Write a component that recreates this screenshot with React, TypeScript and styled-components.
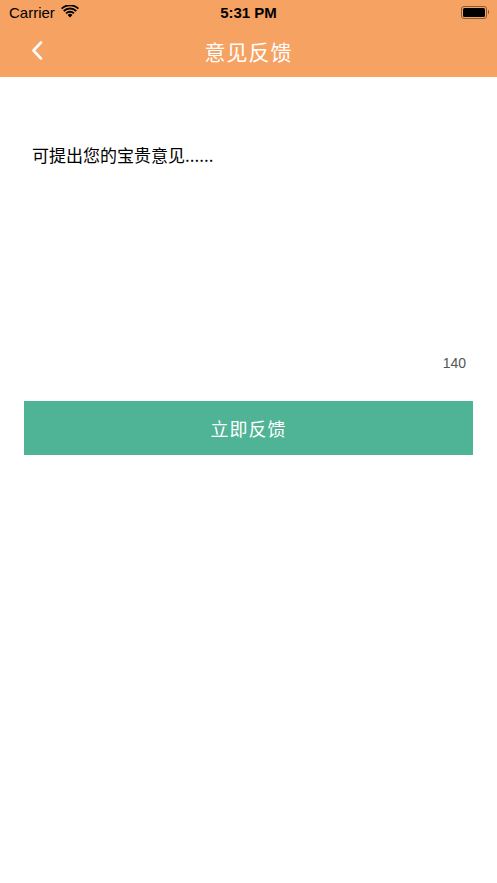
import { createGlobalStyle } from 'styled-components'
import styled from 'styled-components'

const GlobalStyle = createGlobalStyle`
  html, body {
    margin: 0;
    padding: 0;
    background: #ffffff;
  }
  body {
    font-family: 'Noto Sans', 'Noto Sans CJK SC', sans-serif;
  }
`

export default function App() {
  return (
    <Page>
      <GlobalStyle />
      <Header>
        <StatusBar>
          <Left>
            <span>Carrier</span>
            <svg width="18" height="13" viewBox="0 0 18 13">
              <path d="M9 12.6 L6.6 10 A3.4 3.4 0 0 1 11.4 10 Z" fill="#000" />
              <path d="M4.4 7.7 A6.6 6.6 0 0 1 13.6 7.7 L12.3 9.1 A4.7 4.7 0 0 0 5.7 9.1 Z" fill="#000" />
              <path d="M2.1 5.3 A9.9 9.9 0 0 1 15.9 5.3 L14.6 6.7 A8 8 0 0 0 3.4 6.7 Z" fill="#000" />
              <path d="M0 3 A13 13 0 0 1 18 3 L16.8 4.3 A11.2 11.2 0 0 0 1.2 4.3 Z" fill="#000" />
            </svg>
          </Left>
          <Time>5:31 PM</Time>
          <Battery>
            <BatteryBody>
              <BatteryFill />
            </BatteryBody>
            <BatteryNub />
          </Battery>
        </StatusBar>
        <NavBar>
          <BackButton aria-label="back">
            <svg width="12" height="19" viewBox="0 0 12 19">
              <path d="M10 1.5 L2.5 9.5 L10 17.5" fill="none" stroke="#fff" strokeWidth="2.6" strokeLinecap="round" strokeLinejoin="round" />
            </svg>
          </BackButton>
          <Title>意见反馈</Title>
        </NavBar>
      </Header>
      <Content>
        <FeedbackArea placeholder="可提出您的宝贵意见......" maxLength={140} />
        <Counter>140</Counter>
        <SubmitButton>立即反馈</SubmitButton>
      </Content>
    </Page>
  )
}

const Page = styled.div`
  width: 497px;
  min-height: 883px;
  background: #ffffff;
`

const Header = styled.header`
  background: #f6a262;
  display: flex;
  flex-direction: column;
`

const StatusBar = styled.div`
  height: 27px;
  display: flex;
  align-items: center;
  justify-content: space-between;
  padding: 0 8px 0 9px;
  position: relative;
  font-family: 'Liberation Sans', Arial, sans-serif;
  color: #000;
`

const Left = styled.div`
  display: flex;
  align-items: center;
  gap: 6px;
  font-size: 15px;
  margin-top: -2px;

  svg {
    margin-top: -2px;
  }
`

const Time = styled.div`
  position: absolute;
  left: 0;
  right: 0;
  text-align: center;
  font-size: 15px;
  font-weight: 700;
  margin-top: -2px;
  pointer-events: none;
`

const Battery = styled.div`
  display: flex;
  align-items: center;
  gap: 1px;
  margin-top: -3px;
`

const BatteryBody = styled.div`
  width: 22px;
  height: 9px;
  border: 1.5px solid #8a5a35;
  border-radius: 3px;
  padding: 1px;
  box-sizing: content-box;
`

const BatteryFill = styled.div`
  width: 100%;
  height: 100%;
  background: #000;
  border-radius: 1.5px;
`

const BatteryNub = styled.div`
  width: 1.5px;
  height: 4px;
  background: #8a5a35;
  border-radius: 0 1px 1px 0;
`

const NavBar = styled.div`
  height: 50px;
  display: flex;
  align-items: center;
  justify-content: center;
  position: relative;
`

const BackButton = styled.button`
  position: absolute;
  left: 31px;
  top: 14px;
  background: none;
  border: none;
  padding: 0;
  display: flex;
`

const Title = styled.h1`
  margin: 0;
  margin-top: -3px;
  color: #ffffff;
  font-size: 21px;
  font-weight: 400;
  letter-spacing: 1px;
  font-family: 'Noto Sans CJK SC', sans-serif;
`

const Content = styled.main`
  display: flex;
  flex-direction: column;
  padding: 0 24px;
`

const FeedbackArea = styled.textarea`
  margin-top: 58px;
  height: 215px;
  padding: 8px;
  border: none;
  outline: none;
  resize: none;
  font-size: 17px;
  line-height: 24px;
  font-family: 'Noto Sans CJK SC', sans-serif;
  color: #000;

  &::placeholder {
    color: #000;
    opacity: 1;
  }
`

const Counter = styled.div`
  align-self: flex-end;
  margin-top: -11px;
  margin-right: 7px;
  font-family: 'Liberation Sans', Arial, sans-serif;
  font-size: 14px;
  color: #555555;
`

const SubmitButton = styled.button`
  margin-top: 30px;
  height: 54px;
  border: none;
  background: #4fb395;
  color: #ffffff;
  font-size: 18px;
  letter-spacing: 1px;
  font-family: 'Noto Sans CJK SC', sans-serif;
`
